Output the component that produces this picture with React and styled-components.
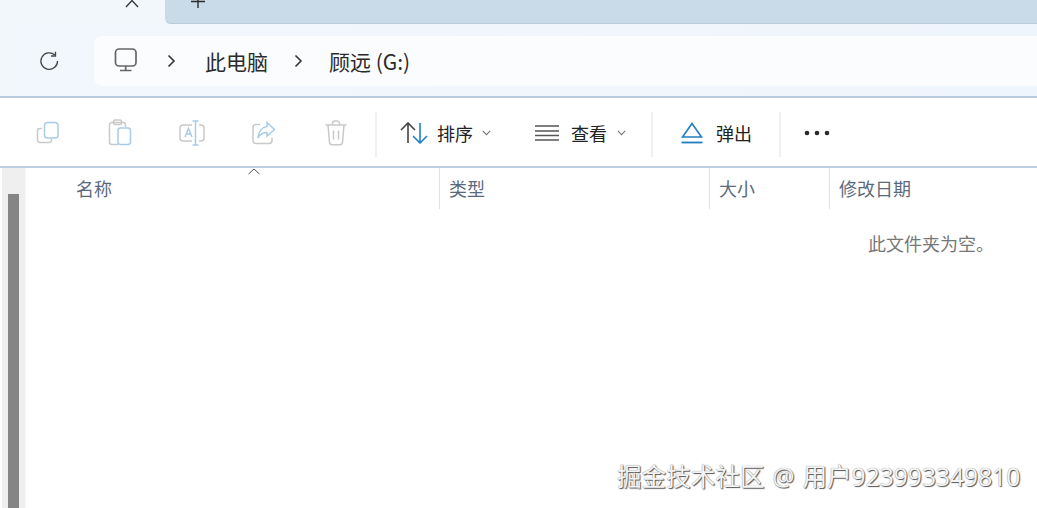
import styled, { createGlobalStyle } from 'styled-components';

const GlobalStyle = createGlobalStyle`
	html, body {
		margin: 0;
		padding: 0;
		background: #fff;
		overflow: hidden;
	}
	body {
		font-family: "Noto Sans CJK SC", "Liberation Sans", sans-serif;
	}
`;

const Page = styled.div`
	width: 1037px;
	height: 508px;
	position: relative;
	overflow: hidden;
	display: flex;
	flex-direction: column;
	background: #fff;
`;

const TabStrip = styled.div`
	height: 24px;
	flex: none;
	display: flex;
	background: #f2f7fc;
`;

const ActiveTab = styled.div`
	width: 165px;
	display: flex;
	justify-content: flex-end;
	padding-right: 26px;
	box-sizing: border-box;
`;

const TabRest = styled.div`
	flex: 1;
	display: flex;
	align-items: flex-start;
	background: #c9dbe9;
	border-bottom: 1px solid #b9cad8;
	border-bottom-left-radius: 6px;
	padding-left: 25px;
`;

const NavBar = styled.div`
	height: 72px;
	flex: none;
	display: flex;
	align-items: flex-start;
	padding-top: 12px;
	box-sizing: border-box;
	background: linear-gradient(90deg, #f2f7fc 0%, #eff5fc 100%);
`;

const RefreshSlot = styled.div`
	width: 94px;
	height: 50px;
	flex: none;
	padding-left: 4px;
	box-sizing: border-box;
	display: flex;
	align-items: center;
	justify-content: center;
`;

const AddressBar = styled.div`
	flex: 1;
	height: 50px;
	display: flex;
	align-items: center;
	background: #fbfcfe;
	border-radius: 8px 0 0 8px;
	color: #2b2b2b;
	font-size: 21px;
`;

const Crumb = styled.span`
	margin-left: ${(p) => p.$left}px;
	line-height: 50px;
	white-space: nowrap;
`;

const CrumbIcon = styled.svg`
	margin-left: ${(p) => p.$left}px;
	margin-top: ${(p) => p.$top || 0}px;
	flex: none;
`;

const Rule = styled.div`
	height: 2px;
	flex: none;
	background: #b9cde0;
`;

const Toolbar = styled.div`
	height: 68px;
	flex: none;
	display: flex;
	align-items: center;
	padding: 2px 0 0 12px;
	box-sizing: border-box;
	background: #fff;
	color: #222;
	font-size: 18px;
`;

const IconButton = styled.div`
	width: 72px;
	height: 50px;
	display: flex;
	align-items: center;
	justify-content: center;
`;

const Separator = styled.div`
	width: 2px;
	height: 45px;
	flex: none;
	background: #f0f1f3;
	margin: 3px 0 0 ${(p) => p.$left}px;
`;

const ToolButton = styled.div`
	display: flex;
	align-items: center;
	flex: none;
	margin-left: ${(p) => p.$left}px;
`;

const ToolLabel = styled.span`
	margin-left: ${(p) => p.$gap}px;
	line-height: 24px;
`;

const Caret = styled.svg`
	margin-left: ${(p) => p.$gap}px;
`;

const Content = styled.div`
	flex: 1;
	display: flex;
	min-height: 0;
	border-top: 2px solid #bccfe0;
`;

const Gutter = styled.div`
	width: 28px;
	flex: none;
	display: flex;
	box-sizing: border-box;
	padding: 0 3px 0 2px;
	background: linear-gradient(90deg, #fff 0%, #fff 85%, #f8f8f8 92%, #fff 100%);
`;

const ScrollTrack = styled.div`
	flex: 1;
	padding: 26px 6px 0;
	background: #efefef;
`;

const ScrollThumb = styled.div`
	height: 100%;
	background: #858585;
`;

const ListPane = styled.div`
	flex: 1;
	display: flex;
	flex-direction: column;
`;

const HeaderRow = styled.div`
	height: 40px;
	flex: none;
	display: grid;
	grid-template-columns: 411px 270px 120px 1fr;
`;

const HeaderCell = styled.div`
	position: relative;
	padding-left: ${(p) => p.$pad}px;
	font-size: 18px;
	line-height: 41px;
	color: #5a6a7c;
	border-left: ${(p) => (p.$first ? 'none' : '1px solid #dde3ea')};
`;

const SortMark = styled.svg`
	position: absolute;
	left: 220px;
	top: -1px;
`;

const EmptyNote = styled.div`
	padding: 23px 0 0 840px;
	font-size: 18px;
	line-height: 24px;
	color: #777;
	white-space: nowrap;
`;

const Watermark = styled.div`
	position: absolute;
	left: 617px;
	top: 460px;
	font-family: "Open Sans", "Noto Sans CJK SC", sans-serif;
	font-size: 24.6px;
	word-spacing: 1.5px;
	line-height: 34px;
	white-space: nowrap;
	color: #f4f4f4;
	text-shadow: 1px 1px 1px #555, 0 0 1px #777;
`;

const Copy = () => (
	<svg width="24" height="24" viewBox="0 0 24 24" fill="none" strokeWidth="1.5">
		<path d="M6 7.5 H4 a2.5 2.5 0 0 0 -2.5 2.5 v9 a2.5 2.5 0 0 0 2.5 2.5 h9 a2.5 2.5 0 0 0 2.5 -2.5 v-1.5" stroke="#c9c9c9" />
		<rect x="8.5" y="1.5" width="13.5" height="15.5" rx="3" stroke="#a9cbe8" />
	</svg>
);

const Paste = () => (
	<svg width="24" height="28" viewBox="0 0 24 28" fill="none" strokeWidth="1.5">
		<path d="M10 25.5 H4 a2.5 2.5 0 0 1 -2.5 -2.5 V6 A2.5 2.5 0 0 1 4 3.5 h11 a2.5 2.5 0 0 1 2.5 2.5 v2" stroke="#c9c9c9" />
		<rect x="5.5" y="1" width="8" height="4.5" rx="1.5" stroke="#c9c9c9" />
		<rect x="10" y="9" width="12.5" height="16.5" rx="2.5" stroke="#a9cbe8" />
	</svg>
);

const Rename = () => (
	<svg width="26" height="26" viewBox="0 0 26 26" fill="none" strokeWidth="1.5">
		<path d="M13 5 H4 a3 3 0 0 0 -3 3 v10 a3 3 0 0 0 3 3 h9 M20 5 h2 a3 3 0 0 1 3 3 v10 a3 3 0 0 1 -3 3 h-2" stroke="#c9c9c9" />
		<path d="M6 17 L9.5 8.5 L13 17 M7.3 14 h4.4" stroke="#a9cbe8" />
		<path d="M13.5 1 h6 M16.5 1 v24 M13.5 25 h6" stroke="#a9cbe8" />
	</svg>
);

const Share = () => (
	<svg width="24" height="24" viewBox="0 0 24 24" fill="none" strokeWidth="1.5">
		<path d="M8 3.5 H4 a3 3 0 0 0 -3 3 v13 a3 3 0 0 0 3 3 h13 a3 3 0 0 0 3 -3 v-3" stroke="#c9c9c9" />
		<path d="M15 1.5 L22.5 8.5 L15 15 V11.5 C11 11.5 8 13 6 17 C6.5 10.5 10 6 15 5.5 Z" stroke="#a9cbe8" />
	</svg>
);

const Trash = () => (
	<svg width="22" height="26" viewBox="0 0 22 26" fill="none" stroke="#c9c9c9" strokeWidth="1.5">
		<path d="M0.5 5 H21.5 M7.5 5 V3.5 A2.5 2.5 0 0 1 10 1 h2 a2.5 2.5 0 0 1 2.5 2.5 V5" />
		<path d="M3 5 L4.5 22 A2.8 2.8 0 0 0 7.3 24.7 H14.7 A2.8 2.8 0 0 0 17.5 22 L19 5" />
		<path d="M8.5 10.5 V19.5 M13.5 10.5 V19.5" />
	</svg>
);

const Chevron = ({ left }) => (
	<CrumbIcon $left={left} width="9" height="14" viewBox="0 0 9 14" fill="none" stroke="#333" strokeWidth="1.6">
		<path d="M1.5 1.5 L7 7 L1.5 12.5" />
	</CrumbIcon>
);

const SmallCaret = ({ gap }) => (
	<Caret $gap={gap} width="9" height="6" viewBox="0 0 9 6" fill="none" stroke="#777" strokeWidth="1.1">
		<path d="M0.8 0.8 L4.5 4.6 L8.2 0.8" />
	</Caret>
);

export default function App() {
	return (
		<Page>
			<GlobalStyle />
			<TabStrip>
				<ActiveTab>
					<svg width="14" height="8" viewBox="0 0 14 8" fill="none" stroke="#333" strokeWidth="1.3">
						<path d="M1 7 L7 0.5 L13 7" />
					</svg>
				</ActiveTab>
				<TabRest>
					<svg width="16" height="9" viewBox="0 0 16 9" fill="none" stroke="#2b2b2b" strokeWidth="1.4">
						<path d="M1 1.5 H15 M8 0 V8" />
					</svg>
				</TabRest>
			</TabStrip>
			<NavBar>
				<RefreshSlot>
					<svg width="20" height="20" viewBox="0 0 20 20" fill="none" stroke="#444" strokeWidth="1.3">
						<path d="M15.8 4 A8.3 8.3 0 1 0 18.5 10" />
						<path d="M16.5 0.8 V5 H12" />
					</svg>
				</RefreshSlot>
				<AddressBar>
					<CrumbIcon $left={20} $top={-2} width="24" height="24" viewBox="0 0 24 24" fill="none" stroke="#666" strokeWidth="1.7">
						<rect x="1.5" y="1" width="20.5" height="17" rx="3.5" />
						<path d="M11.7 18 V22 M6 22.5 H17.5" />
					</CrumbIcon>
					<Chevron left={29} />
					<Crumb $left={29}>此电脑</Crumb>
					<Chevron left={26} />
					<Crumb $left={26}>顾远 (G:)</Crumb>
				</AddressBar>
			</NavBar>
			<Rule />
			<Toolbar>
				<IconButton><Copy /></IconButton>
				<IconButton><Paste /></IconButton>
				<IconButton><Rename /></IconButton>
				<IconButton><Share /></IconButton>
				<IconButton><Trash /></IconButton>
				<Separator $left={3} />
				<ToolButton $left={23}>
					<svg width="28" height="22" viewBox="0 0 28 22" fill="none" strokeWidth="1.6">
						<path d="M1 8 L8 1 L15 8 M8 1 V21" stroke="#444" />
						<path d="M13 14 L20 21 L27 14 M20 21 V1" stroke="#1e83c9" />
					</svg>
					<ToolLabel $gap={9}>排序</ToolLabel>
					<SmallCaret gap={9} />
				</ToolButton>
				<ToolButton $left={44}>
					<svg width="24" height="18" viewBox="0 0 24 18" fill="none" stroke="#555" strokeWidth="1.5">
						<path d="M0 2 H24 M0 7 H24 M0 11.5 H24 M0 16 H24" />
					</svg>
					<ToolLabel $gap={12}>查看</ToolLabel>
					<SmallCaret gap={10} />
				</ToolButton>
				<Separator $left={25} />
				<ToolButton $left={28}>
					<svg width="22" height="22" viewBox="0 0 22 22" fill="none" stroke="#1e7fc0" strokeWidth="1.6">
						<path d="M11 1.5 L20.5 15 H1.5 Z" />
						<path d="M0.5 20.5 H21.5" strokeWidth="1.8" />
					</svg>
					<ToolLabel $gap={13}>弹出</ToolLabel>
				</ToolButton>
				<Separator $left={27} />
				<ToolButton $left={23}>
					<svg width="26" height="6" viewBox="0 0 26 6" fill="#2a2a2a">
						<circle cx="3" cy="3" r="2.3" />
						<circle cx="13" cy="3" r="2.3" />
						<circle cx="23" cy="3" r="2.3" />
					</svg>
				</ToolButton>
			</Toolbar>
			<Content>
				<Gutter>
					<ScrollTrack>
						<ScrollThumb />
					</ScrollTrack>
				</Gutter>
				<ListPane>
					<HeaderRow>
						<HeaderCell $first $pad={48}>
							名称
							<SortMark width="12" height="8" viewBox="0 0 12 8" fill="none" stroke="#555" strokeWidth="1">
								<path d="M0.5 7 L6 2 L11.5 7" />
							</SortMark>
						</HeaderCell>
						<HeaderCell $pad={9}>类型</HeaderCell>
						<HeaderCell $pad={9}>大小</HeaderCell>
						<HeaderCell $pad={9}>修改日期</HeaderCell>
					</HeaderRow>
					<EmptyNote>此文件夹为空。</EmptyNote>
				</ListPane>
			</Content>
			<Watermark>掘金技术社区 @ 用户923993349810</Watermark>
		</Page>
	);
}
